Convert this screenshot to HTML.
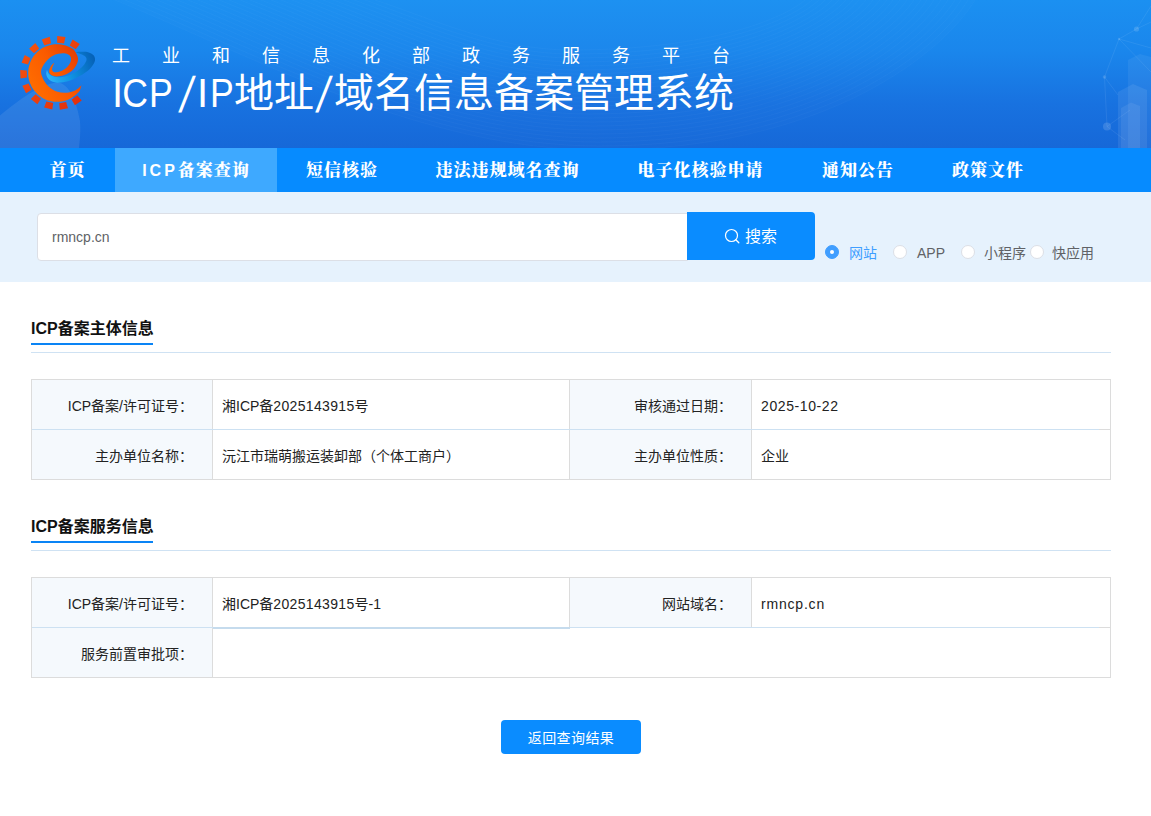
<!DOCTYPE html>
<html lang="zh-CN">
<head>
<meta charset="utf-8">
<title>ICP/IP地址/域名信息备案管理系统</title>
<style>
*{box-sizing:border-box;margin:0;padding:0}
html,body{width:1151px;height:816px;background:#fff;overflow:hidden}
body{font-family:"Liberation Sans","Noto Sans CJK SC",sans-serif;color:#222;position:relative;font-size:14px}
.abs{position:absolute}
#hdr{left:0;top:0;width:1151px;height:148px;background:linear-gradient(180deg,#1b90f1 0%,#1a86ec 35%,#1872e0 70%,#1668d8 100%);overflow:hidden}
#hdr svg.bg{position:absolute;left:0;top:0}
#sub{left:112px;top:43px;font-size:18px;line-height:26px;letter-spacing:32px;color:#fff;white-space:nowrap}
#ttl{left:112px;top:66px;font-size:40px;line-height:54px;letter-spacing:0;color:#fff;white-space:nowrap}
#ttl .la{display:inline-block;width:122px;height:54px;vertical-align:top;position:relative}
#ttl .L{position:absolute;top:0;width:30px;text-align:center;display:block}
#ttl .sl{display:inline-block;width:20px;text-align:center;transform:translateY(1px) skewX(-10deg) scaleY(1.25)}
#nav{left:0;top:148px;width:1151px;height:44px;background:#068bff}
#nav .it{position:absolute;top:0;height:44px;line-height:45px;color:#fff;font-family:"Liberation Sans","Noto Serif CJK SC",serif;font-weight:900;font-size:17px;letter-spacing:1px;white-space:nowrap;text-align:center}
#nav .act{background:#3ea9ff}
#sbar{left:0;top:192px;width:1151px;height:90px;background:#e6f2fd}
#inp{left:37px;top:213px;width:651px;height:48px;background:#fff;border:1px solid #dcdfe6;border-radius:4px 0 0 4px;color:#606266;font-size:14px;line-height:46px;padding-left:14px}
#sbtn{left:687px;top:212px;width:128px;height:48px;background:#0a8cff;border-radius:0 4px 4px 0;color:#fff;font-size:16px;line-height:48px;white-space:nowrap}
.rad{top:245px;height:14px;font-size:14px;line-height:14px;color:#606266;white-space:nowrap}
.rc{position:absolute;width:14px;height:14px;border-radius:50%;border:1px solid #dcdfe6;background:#fff}
.rc.on{border-color:#409eff;background:#409eff}
.rc.on:after{content:"";position:absolute;left:4px;top:4px;width:4px;height:4px;border-radius:50%;background:#fff}
.rl{position:absolute;font-size:14px;line-height:20px;color:#606266;white-space:nowrap}
.sect{left:31px;font-size:16px;font-weight:bold;line-height:24px;color:#111;white-space:nowrap;letter-spacing:0}
.ul{left:31px;width:122px;height:2px;background:#0a84f5}
.hr{left:31px;width:1080px;height:1px;background:#cfe2f3}
.tb{left:31px;width:1080px;height:101px;border:1px solid #dcdcdc;font-size:14px;color:#222}
.tb div{position:absolute}
.tb .lb{background:#f5f9fd}
.tb .vl{width:1px;background:#dcdcdc}
.tb .hl{height:1px;background:#cde1f2}
.tb .hl.g{background:#dcdcdc}
.tb .hl.k{background:#c5dbed}
.tb .c{height:49px;line-height:52px;padding-left:9px;white-space:nowrap}
.tb .c.l{text-align:right;padding:0 19px 0 0}
.d{letter-spacing:.33px}
.dt{letter-spacing:.6px}
#back{left:501px;top:720px;width:140px;height:34px;background:#0a8cff;border-radius:4px;color:#fff;font-size:14px;line-height:36px;letter-spacing:.4px;text-align:center}
</style>
</head>
<body>
<div id="hdr" class="abs">
<svg class="bg" width="1151" height="148" viewBox="0 0 1151 148" ><!--BG--><path d="M0 115.6C20 99 40 84.5 57 82.5C68 83 76 98 80 121C81 134 79.5 142 79 148L0 148Z" fill="#fff" fill-opacity=".085"/><path d="M115 0C250 55 420 150 600 150C830 150 945 50 975 0Z" fill="#fff" fill-opacity=".012"/><g fill="none" stroke="#fff" stroke-opacity=".045" stroke-width=".6"><path d="M115 0C251 55 421 150 600 150 C829 150 945 50 975 0"/><path d="M125 0C258 54 424 146 599 146 C824 146 939 49 968 0"/><path d="M136 0C265 52 427 142 598 142 C820 142 932 47 961 0"/><path d="M146 0C272 51 430 138 596 138 C815 138 926 46 955 0"/><path d="M157 0C279 49 433 134 595 134 C810 134 920 45 948 0"/><path d="M167 0C287 48 436 130 594 130 C806 130 913 43 941 0"/><path d="M177 0C294 46 439 126 593 126 C801 126 907 42 934 0"/><path d="M188 0C301 45 442 122 592 122 C796 122 901 41 927 0"/><path d="M198 0C308 43 445 118 590 118 C792 118 894 39 921 0"/><path d="M209 0C315 42 448 114 589 114 C787 114 888 38 914 0"/><path d="M219 0C322 40 451 110 588 110 C783 110 881 37 907 0"/><path d="M229 0C329 39 455 106 587 106 C778 106 875 35 900 0"/><path d="M240 0C337 37 458 102 586 102 C773 102 869 34 893 0"/><path d="M250 0C344 36 461 98 584 98 C769 98 862 33 887 0"/><path d="M261 0C351 34 464 94 583 94 C764 94 856 31 880 0"/><path d="M271 0C358 33 467 90 582 90 C760 90 850 30 873 0"/><path d="M281 0C365 32 470 86 581 86 C755 86 843 29 866 0"/><path d="M292 0C372 30 473 82 580 82 C750 82 837 27 859 0"/><path d="M302 0C380 29 476 78 578 78 C746 78 831 26 853 0"/><path d="M313 0C387 27 479 74 577 74 C741 74 824 25 846 0"/><path d="M323 0C394 26 482 70 576 70 C736 70 818 23 839 0"/><path d="M333 0C401 24 485 66 575 66 C732 66 812 22 832 0"/><path d="M344 0C408 23 489 62 574 62 C727 62 805 21 825 0"/><path d="M354 0C415 21 492 58 572 58 C723 58 799 19 819 0"/><path d="M365 0C422 20 495 54 571 54 C718 54 793 18 812 0"/><path d="M375 0C430 18 498 50 570 50 C713 50 786 17 805 0"/></g><g stroke="#fff" stroke-opacity=".13" stroke-width=".6" fill="none"><path d="M1119 39L1136.5 29L1151 6M1136.5 29L1151 22M1119 39L1104.5 77L1107 126.5M1119 39L1151 72M1104.5 77L1118 95M1107 126.5L1130 110M1107 126.5L1125 140M1119 39L1151 48"/></g>
<g fill="#fff" fill-opacity=".14"><circle cx="1136.5" cy="29" r="2.6"/><circle cx="1119" cy="39" r="1.2"/><circle cx="1104.5" cy="77" r="1.8"/><circle cx="1107" cy="126.5" r="4"/></g>
<g fill="#fff"><path d="M1128 60L1140 54L1151 57V148H1128Z" fill-opacity=".06"/><path d="M1118 92L1133 84L1147 90V148H1118Z" fill-opacity=".08"/><path d="M1121 108L1131 102.5L1140 106V148H1121Z" fill-opacity=".07"/></g><!--/BG--><!--LOGO--><g id="logo">
<defs><linearGradient id="og" gradientUnits="userSpaceOnUse" x1="30" y1="85" x2="82" y2="55"><stop offset="0" stop-color="#ff6c00"/><stop offset="0.5" stop-color="#fa5a00"/><stop offset="1" stop-color="#e33c05"/></linearGradient>
<linearGradient id="bg2" gradientUnits="userSpaceOnUse" x1="46" y1="76" x2="95" y2="58"><stop offset="0" stop-color="#2cb6fa"/><stop offset="0.45" stop-color="#0f92e2"/><stop offset="1" stop-color="#0560b6"/></linearGradient>
<linearGradient id="tg" gradientUnits="userSpaceOnUse" x1="22" y1="50" x2="82" y2="100"><stop offset="0" stop-color="#f4520e"/><stop offset="1" stop-color="#e2300c"/></linearGradient></defs>
<path d="M47.0 69.4 C46.9 70.3 45.9 72.8 46.3 74.6 C46.7 76.4 47.8 78.8 49.6 80.1 C51.4 81.4 53.8 82.5 56.9 82.7 C60.0 82.9 64.1 82.4 67.9 81.3 C71.7 80.2 76.0 78.1 79.7 76.0 C83.4 73.9 87.5 71.2 90.0 68.7 C92.5 66.2 94.1 63.4 94.8 61.3 C95.5 59.1 94.8 57.2 94.0 55.8 C93.2 54.4 91.7 53.6 90.0 52.9 C88.3 52.2 86.4 51.9 84.1 51.8 C81.8 51.7 76.3 51.8 76.0 52.3 C75.7 52.8 80.3 53.8 82.0 54.6 C83.7 55.5 85.3 56.2 86.0 57.4 C86.7 58.5 86.8 59.8 86.0 61.5 C85.2 63.2 83.7 65.5 81.5 67.5 C79.3 69.5 76.1 72.0 72.9 73.6 C69.7 75.2 65.1 76.6 62.1 77.1 C59.1 77.6 56.8 77.2 54.7 76.8 C52.6 76.4 50.8 75.6 49.6 74.6 C48.4 73.6 47.8 71.8 47.4 70.9 C47.0 70.0 47.1 69.7 47.0 69.4Z" fill="url(#bg2)"/>
<g fill="url(#tg)"><polygon points="69.7,45.5 72.6,39.5 79.8,43.9 75.7,49.2"/><polygon points="57.1,42.7 57.2,36.1 65.5,37.1 64.0,43.5"/><polygon points="44.4,45.4 41.7,39.4 49.7,36.8 51.1,43.3"/><polygon points="34.0,53.2 29.1,48.8 35.3,43.1 39.2,48.5"/><polygon points="27.9,64.6 21.5,62.7 24.8,55.0 30.6,58.2"/><polygon points="27.0,77.5 20.5,78.5 20.2,70.1 26.8,70.6"/><polygon points="31.7,89.7 26.1,93.2 22.3,85.7 28.5,83.4"/><polygon points="41.0,98.7 37.4,104.3 30.8,99.1 35.5,94.3"/><polygon points="53.2,103.1 52.3,109.6 44.1,107.6 46.4,101.4"/><polygon points="66.1,101.9 68.0,108.3 59.8,109.8 59.2,103.2"/><polygon points="77.3,95.5 81.7,100.4 74.9,105.3 71.6,99.5"/></g>
<path d="M54.3 63.0 C53.8 63.4 52.4 64.2 51.6 65.2 C50.8 66.2 50.0 67.5 49.6 68.7 C49.2 69.9 48.9 71.3 49.3 72.4 C49.7 73.5 50.5 74.6 51.8 75.3 C53.1 76.0 54.7 76.6 56.9 76.5 C59.1 76.4 62.5 75.6 65.0 74.7 C67.5 73.8 69.8 72.4 71.6 70.9 C73.4 69.4 75.0 67.4 76.0 65.7 C77.0 64.0 77.7 62.2 77.9 60.6 C78.2 59.0 78.0 57.8 77.5 56.2 C77.0 54.6 75.8 52.5 74.9 51.2 C74.0 49.9 73.4 49.4 72.3 48.6 C71.1 47.8 69.5 47.0 68.1 46.4 C66.6 45.8 65.1 45.3 63.5 45.0 C62.0 44.6 60.4 44.4 58.9 44.3 C57.3 44.2 55.7 44.2 54.1 44.3 C52.6 44.5 51.0 44.8 49.5 45.2 C48.0 45.6 46.5 46.2 45.0 46.8 C43.6 47.5 42.2 48.2 40.9 49.1 C39.6 50.0 38.3 51.0 37.2 52.1 C36.1 53.2 35.0 54.4 34.0 55.6 C33.1 56.9 32.2 58.2 31.5 59.6 C30.8 61.0 30.1 62.5 29.7 64.0 C29.2 65.5 28.8 67.0 28.5 68.6 C28.3 70.1 28.2 71.7 28.2 73.3 C28.2 74.9 28.4 76.5 28.6 78.0 C28.9 79.5 29.3 81.1 29.8 82.6 C30.4 84.1 31.0 85.5 31.8 86.9 C32.5 88.3 33.4 89.6 34.4 90.8 C35.4 92.1 36.5 93.2 37.6 94.3 C38.8 95.4 40.1 96.3 41.4 97.2 C42.7 98.0 44.1 98.8 45.5 99.4 C47.0 100.1 48.5 100.6 50.0 100.9 C51.6 101.3 53.1 101.6 54.7 101.7 C56.3 101.8 57.9 101.8 59.4 101.7 C61.0 101.6 62.6 101.3 64.1 100.9 C65.6 100.5 67.1 100.0 68.6 99.4 C70.0 98.7 71.4 98.0 72.7 97.1 C74.1 96.3 75.3 95.3 76.5 94.2 C77.6 93.1 79.1 91.5 79.7 90.7 C80.3 89.9 80.1 89.7 80.2 89.5 L81.6 85.0 C81.0 85.6 79.7 87.3 78.2 88.4 C76.7 89.5 74.6 90.7 72.4 91.4 C70.2 92.1 67.5 92.7 65.0 92.8 C62.5 92.9 59.9 92.5 57.6 91.8 C55.3 91.1 53.0 89.9 51.0 88.5 C49.0 87.1 47.4 85.4 45.9 83.4 C44.4 81.5 43.0 78.9 42.2 76.8 C41.4 74.7 40.9 72.9 41.1 70.9 C41.3 68.9 42.5 66.8 43.5 65.0 C44.5 63.2 45.9 61.4 47.4 59.9 C48.9 58.4 50.7 56.9 52.5 55.9 C54.3 54.9 56.4 54.1 58.4 53.7 C60.4 53.3 62.6 53.1 64.3 53.3 C66.0 53.5 67.6 54.0 68.7 54.8 C69.8 55.5 70.6 56.6 70.9 57.8 C71.2 59.0 71.1 60.6 70.5 62.1 C69.9 63.6 68.7 65.5 67.2 67.0 C65.7 68.5 63.3 70.2 61.3 71.1 C59.3 72.0 56.8 72.3 55.4 72.3 C54.0 72.3 53.1 71.6 52.6 70.9 C52.1 70.2 51.9 69.2 52.2 67.9 C52.5 66.6 53.9 63.8 54.3 63.0Z" fill="url(#og)"/>
</g><!--/LOGO--></svg>
<div id="sub" class="abs">工业和信息化部政务服务平台</div>
<div id="ttl" class="abs"><span class="la"><span class="L" style="left:-9.5px;transform:scaleX(1.00)">I</span><span class="L" style="left:7.8px;transform:scaleX(0.89)">C</span><span class="L" style="left:33.8px;transform:scaleX(0.89)">P</span><span class="L" style="left:59.5px;transform:translateY(1px) skewX(-10deg) scaleY(1.25)">/</span><span class="L" style="left:75.5px;transform:scaleX(1.00)">I</span><span class="L" style="left:95.2px;transform:scaleX(0.89)">P</span></span>地址<span class="sl">/</span>域名信息备案管理系统</div>
</div>
<div id="nav" class="abs">
<div class="it" style="left:0;width:115px;padding-left:20px">首页</div>
<div class="it act" style="left:115px;width:162px"><span style="font-size:16px;font-weight:bold;letter-spacing:3px">ICP</span>备案查询</div>
<div class="it" style="left:277px;width:130px">短信核验</div>
<div class="it" style="left:407px;width:201px">违法违规域名查询</div>
<div class="it" style="left:608px;width:185px">电子化核验申请</div>
<div class="it" style="left:793px;width:130px">通知公告</div>
<div class="it" style="left:923px;width:130px">政策文件</div>
</div>
<div id="sbar" class="abs"></div>
<div id="inp" class="abs">rmncp.cn</div>
<div id="sbtn" class="abs"><svg class="abs" style="left:36px;top:15px" width="18" height="18" viewBox="0 0 18 18"><circle cx="8.5" cy="8.5" r="6" fill="none" stroke="#fff" stroke-width="1.2"/><path d="M12.8 12.8 L15.8 15.8" stroke="#fff" stroke-width="1.3" stroke-linecap="round"/></svg><span class="abs" style="left:58px;top:1px">搜索</span></div>
<div class="rc on abs" style="left:825px;top:245px"></div><div class="rl" style="left:849px;top:243px;color:#409eff">网站</div>
<div class="rc abs" style="left:893px;top:245px"></div><div class="rl" style="left:917px;top:243px">APP</div>
<div class="rc abs" style="left:961px;top:245px"></div><div class="rl" style="left:984px;top:243px">小程序</div>
<div class="rc abs" style="left:1030px;top:245px"></div><div class="rl" style="left:1052px;top:243px">快应用</div>

<div class="sect abs" style="top:317px">ICP备案主体信息</div>
<div class="ul abs" style="top:343px"></div>
<div class="hr abs" style="top:352px"></div>
<div class="tb abs" style="top:379px"><div class="lb" style="left:0;width:180px;top:0;height:99px"></div><div class="lb" style="left:538px;width:181px;top:0;height:99px"></div><div class="vl" style="left:180px;top:0;height:99px"></div><div class="vl" style="left:537px;top:0;height:99px"></div><div class="vl" style="left:719px;top:0;height:99px"></div><div class="hl" style="left:0;top:49px;width:1067px"></div><div class="hl g" style="left:1067px;top:49px;width:11px"></div><div class="c l" style="left:0;top:0px;width:180px">ICP备案/许可证号：</div><div class="c" style="left:181px;top:0px;width:356px">湘ICP备<span class="d">2025143915</span>号</div><div class="c l" style="left:538px;top:0px;width:181px">审核通过日期：</div><div class="c" style="left:720px;top:0px;width:358px"><span class="dt">2025-10-22</span></div><div class="c l" style="left:0;top:50px;width:180px">主办单位名称：</div><div class="c" style="left:181px;top:50px;width:356px">沅江市瑞萌搬运装卸部（个体工商户）</div><div class="c l" style="left:538px;top:50px;width:181px">主办单位性质：</div><div class="c" style="left:720px;top:50px;width:358px">企业</div></div>

<div class="sect abs" style="top:515px">ICP备案服务信息</div>
<div class="ul abs" style="top:541px"></div>
<div class="hr abs" style="top:550px"></div>
<div class="tb abs" style="top:577px"><div class="lb" style="left:0;width:180px;top:0;height:99px"></div><div class="lb" style="left:538px;width:181px;top:0;height:49px"></div><div class="vl" style="left:180px;top:0;height:99px"></div><div class="vl" style="left:537px;top:0;height:49px"></div><div class="vl" style="left:719px;top:0;height:49px"></div><div class="hl" style="left:0;top:49px;width:1067px"></div><div class="hl g" style="left:1067px;top:49px;width:11px"></div><div class="hl k" style="left:181px;top:49px;width:357px;height:2px"></div><div class="c l" style="left:0;top:0px;width:180px">ICP备案/许可证号：</div><div class="c" style="left:181px;top:0px;width:356px">湘ICP备<span class="d">2025143915</span>号-<span class="d">1</span></div><div class="c l" style="left:538px;top:0px;width:181px">网站域名：</div><div class="c" style="left:720px;top:0px;width:358px"><span style="letter-spacing:.8px">rmncp.cn</span></div><div class="c l" style="left:0;top:50px;width:180px">服务前置审批项：</div><div class="c" style="left:181px;top:50px;width:356px"></div></div>
<div id="back" class="abs">返回查询结果</div>
</body>
</html>
